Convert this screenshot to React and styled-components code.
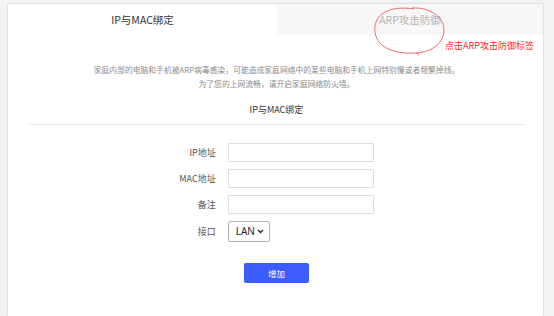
import React, { useState } from 'react';
import styled, { createGlobalStyle } from 'styled-components';

const GlobalStyle = createGlobalStyle`
  html, body {
    margin: 0;
    padding: 0;
    background: #f2f3f5;
    font-family: "Noto Sans CJK SC", "Noto Sans", sans-serif;
  }
`;

const Page = styled.div`
  position: relative;
  padding: 4px 11px 0 8px;
  height: 312px;
  overflow: hidden;
`;

const Card = styled.div`
  background: #fff;
  height: 100%;
  box-shadow: 0 0 2px rgba(0, 0, 0, 0.22);
`;

const TabBar = styled.div`
  display: grid;
  grid-template-columns: 269px 1fr;
  height: 31px;
`;

const Tab = styled.div`
  display: flex;
  align-items: center;
  justify-content: center;
  font-size: 10.5px;
  cursor: pointer;
  color: ${props => (props.active ? '#333' : '#b3b3b3')};
  background: ${props => (props.active ? '#fff' : '#f7f7f8')};
`;

const Content = styled.div`
  margin: 0 18px 0 20px;
`;

const Intro = styled.p`
  margin: 28px 0 0;
  text-align: center;
  font-size: 7.8px;
  line-height: 14px;
  color: #8a8a8a;
`;

const SectionTitle = styled.div`
  margin-top: 12px;
  padding-bottom: 7px;
  text-align: center;
  font-size: 9px;
  line-height: 14px;
  color: #333;
  border-bottom: 1px solid #ececec;
`;

const Form = styled.div`
  display: grid;
  grid-template-columns: auto 146px;
  grid-template-rows: 19px 19px 19px 21px;
  justify-content: center;
  align-items: center;
  column-gap: 12px;
  row-gap: 7px;
  margin-top: 18px;
`;

const Label = styled.label`
  text-align: right;
  font-size: 9px;
  line-height: 12px;
  color: #555;
  white-space: nowrap;
`;

const Input = styled.input`
  box-sizing: border-box;
  width: 146px;
  height: 19px;
  border: 1px solid #dedede;
  border-radius: 1px;
  outline: none;
  padding: 0 4px;
  font-size: 9px;
`;

const SelectWrap = styled.div`
  position: relative;
  width: 42px;
  height: 21px;
`;

const Select = styled.select`
  display: block;
  appearance: none;
  box-sizing: border-box;
  width: 42px;
  height: 21px;
  margin: 0;
  border: 1px solid #b5b5b5;
  border-radius: 2px;
  background: #fff;
  font-family: "Noto Sans", sans-serif;
  font-size: 10px;
  line-height: 19px;
  color: #222;
  padding: 0 0 0 7px;
  outline: none;
`;

const Chevron = styled.svg`
  position: absolute;
  right: 6px;
  top: 8px;
  pointer-events: none;
`;

const Actions = styled.div`
  display: flex;
  justify-content: center;
  margin-top: 21px;
`;

const AddButton = styled.button`
  width: 65px;
  height: 20px;
  border: none;
  border-radius: 2px;
  background: #3c5cfe;
  color: #fff;
  font-family: inherit;
  font-size: 8.5px;
  cursor: pointer;
`;

const Circle = styled.svg`
  position: absolute;
  left: 372px;
  top: 5px;
`;

const Note = styled.div`
  position: absolute;
  left: 445px;
  top: 39px;
  font-size: 9px;
  line-height: 13px;
  color: #ff2b2b;
  white-space: nowrap;
`;

const App = () => {
  const [tab, setTab] = useState('bind');

  return (
    <>
      <GlobalStyle />
      <Page>
        <Card>
          <TabBar>
            <Tab active={tab === 'bind'} onClick={() => setTab('bind')}>IP与MAC绑定</Tab>
            <Tab active={tab === 'arp'} onClick={() => setTab('arp')}>ARP攻击防御</Tab>
          </TabBar>
          <Content>
            <Intro>
              家庭内部的电脑和手机被ARP病毒感染，可能造成家庭网络中的某些电脑和手机上网特别慢或者频繁掉线。
              <br />
              为了您的上网流畅，请开启家庭网络防火墙。
            </Intro>
            <SectionTitle>IP与MAC绑定</SectionTitle>
            <Form>
              <Label>IP地址</Label>
              <Input />
              <Label>MAC地址</Label>
              <Input />
              <Label>备注</Label>
              <Input />
              <Label>接口</Label>
              <SelectWrap>
                <Select defaultValue="LAN">
                  <option>LAN</option>
                  <option>WAN</option>
                </Select>
                <Chevron width="7" height="5" viewBox="0 0 7 5">
                  <path d="M1 1 L3.5 3.5 L6 1" fill="none" stroke="#222" strokeWidth="1.4" />
                </Chevron>
              </SelectWrap>
            </Form>
            <Actions>
              <AddButton>增加</AddButton>
            </Actions>
          </Content>
        </Card>

        {/* hand drawn annotation */}
        <Circle width="76" height="52" viewBox="0 0 76 52">
          <path
            d="M40 3 C58 2 72 12 72 25 C72 38 60 47 44 48 C30 49 14 46 7 37 C1 29 1 16 10 9 C18 3 30 2 42 4"
            fill="none"
            stroke="#f25a5a"
            strokeWidth="0.9"
          />
          <path d="M44 48 C47 49 48 50 46 50" fill="none" stroke="#f25a5a" strokeWidth="0.8" />
        </Circle>
        <Note>点击ARP攻击防御标签</Note>
      </Page>
    </>
  );
};

export default App;
